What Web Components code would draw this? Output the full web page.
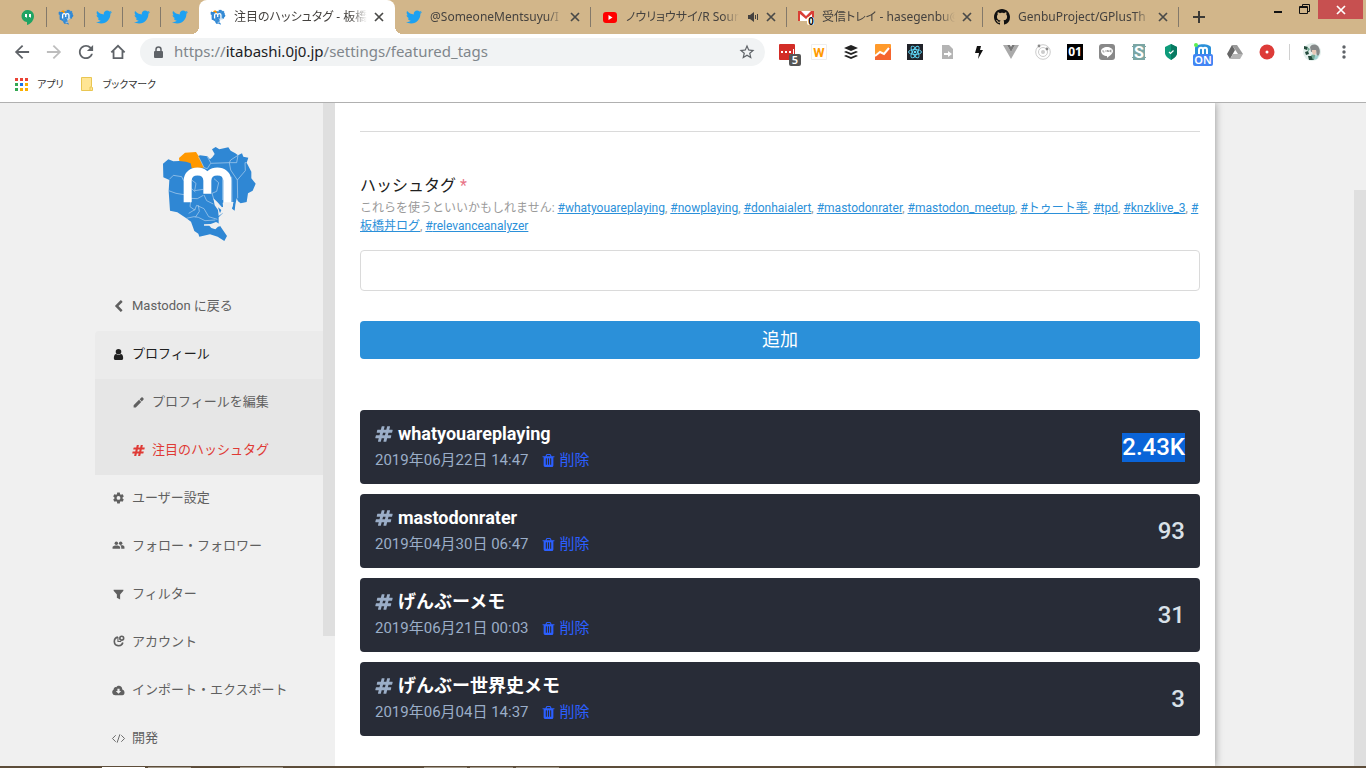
<!DOCTYPE html>
<html lang="ja">
<head>
<meta charset="utf-8">
<title>注目のハッシュタグ - 板橋丼</title>
<style>
    html, body { height: 100%; margin: 0; }

    body {
        display: flex;
        flex-direction: column;
        overflow: hidden;
        background: #f0f0f0;
        font-family: Roboto, 'Noto Sans CJK JP', sans-serif;
        color: #202020;
    }
</style>
</head>
<body>

<tab-strip>
    <pinned-tab icon="hangouts"></pinned-tab>
    <pinned-tab icon="map"></pinned-tab>
    <pinned-tab icon="twitter"></pinned-tab>
    <pinned-tab icon="twitter"></pinned-tab>
    <pinned-tab icon="twitter"></pinned-tab>
    <browser-tab icon="map" active>注目のハッシュタグ - 板橋丼</browser-tab>
    <browser-tab icon="twitter">@SomeoneMentsuyu/I</browser-tab>
    <browser-tab icon="youtube" audio>ノウリョウサイ/R Sound</browser-tab>
    <browser-tab icon="gmail">受信トレイ - hasegenbu@</browser-tab>
    <browser-tab icon="github">GenbuProject/GPlusTh</browser-tab>
</tab-strip>
<tool-bar></tool-bar>
<bookmark-bar></bookmark-bar>

<page-view>
    <side-nav slot="side">
        <nav-item icon="chevron">Mastodon に戻る</nav-item>
        <nav-item icon="user" selected>プロフィール</nav-item>
        <nav-item icon="pencil" sub>プロフィールを編集</nav-item>
        <nav-item icon="hashtag" sub current>注目のハッシュタグ</nav-item>
        <nav-item icon="cog">ユーザー設定</nav-item>
        <nav-item icon="users">フォロー・フォロワー</nav-item>
        <nav-item icon="filter">フィルター</nav-item>
        <nav-item icon="account">アカウント</nav-item>
        <nav-item icon="cloud">インポート・エクスポート</nav-item>
        <nav-item icon="code">開発</nav-item>
    </side-nav>
    <tag-form></tag-form>
    <tag-list>
        <tag-card date="2019年06月22日 14:47" count="2.43K" marked>whatyouareplaying</tag-card>
        <tag-card date="2019年04月30日 06:47" count="93">mastodonrater</tag-card>
        <tag-card date="2019年06月21日 00:03" count="31">げんぶーメモ</tag-card>
        <tag-card date="2019年06月04日 14:37" count="3">げんぶー世界史メモ</tag-card>
    </tag-list>
</page-view>
<task-edge></task-edge>

<script>
const HASH = '<path d="M991 1024l64-256h-254l-64 256h254zm768-504l-56 224q-7 24-31 24h-327l-64 256h311q15 0 25 12 10 14 6 28l-56 224q-5 24-31 24h-327l-81 328q-7 24-31 24h-224q-16 0-26-12-9-12-6-28l78-312h-254l-81 328q-7 24-31 24h-225q-15 0-25-12-9-12-6-28l78-312h-311q-15 0-25-12-9-12-6-28l56-224q7-24 31-24h327l64-256h-311q-15 0-25-12-10-14-6-28l56-224q5-24 31-24h327l81-328q7-24 32-24h224q15 0 25 12 9 12 6 28l-78 312h254l81-328q7-24 32-24h224q15 0 25 12 9 12 6 28l-78 312h311q15 0 25 12 9 12 6 28z"/>'

/* name: [viewBox, markup] */
const icons = {
    /* favicons */
    map: ['207 39 300 300', `
        <path fill="#2f87d4" d="M219 101L235 88L250 94L268 93L300 90L330 76L352 79L360 88L367 82L374 72L366 58L377 51L388 58L415 52L422 62L436 70L444 76L456 70L460 80L475 83L470 98L484 125L484 145L497 161L488 182L474 190L470 216L452 220L444 214L440 205L436 224L434 242L426 236L430 216L400 216L398 250L386 262L386 278L393 292L411 318L403 333L383 320L360 313L328 320L325 311L313 303L303 275L289 265L262 247L240 242L236 183L238 150L220 142Z"/>
        <path fill="#ff9800" d="M267 84L285 68L318 66L328 82L333 95L342 113L305 114L302 100L288 95L268 93Z"/>
        <g fill="none" stroke="#b5d3ee" stroke-width="2">
            <path d="M238 148L250 136L275 140L281 152M236 182L258 190L282 194M303 205L300 230L314 240L320 226L342 236L356 260L382 268M305 150L318 160L314 182L340 178M305 176L316 186M325 80L334 96L342 113L352 116L362 100L418 98L422 90L444 76M352 80L362 98M444 76L440 98L418 98L422 120L442 150L466 122L465 98L470 98M442 150L443 205M372 146L386 158L380 184L366 190M398 140L398 210M342 195L350 212L370 222M366 190L372 210M325 226L328 244L316 262M296 250L316 238M289 265L312 260L325 262L345 272L376 270M303 205L322 206L340 196M425 140L426 216"/>
        </g>
        <g fill="#f0f0f0"><path d="M370 205L382 216L396 232L404 228L399 248L386 258L384 240L374 226ZM342 283L362 282L378 276L390 282L393 288L384 290L376 298L364 294L358 287L342 287ZM398 218L430 216L428 230L414 226L400 240Z"/></g>
        <path fill="#2f87d4" d="M384 232L394 240L390 250Z"/>
        <path fill="none" stroke="#fff" stroke-width="24" d="M293 217V152C293 115 352 115 352 152V191M352 152C352 115 412 115 412 152V217"/>`],
    hangouts: ['0 0 16 16', '<path fill="#1fa463" d="M8 1a6 6 0 0 0-1 12v3c4-1 7-5 7-9a6 6 0 0 0-6-6z"/><path fill="#fff" d="M5 5h2v3l-1 1V8H5zM9 5h2v3l-1 1V8H9z"/>'],
    twitter: ['0 0 24 24', '<path fill="#1da1f2" d="M23.954 4.569c-.885.389-1.83.654-2.825.775 1.014-.611 1.794-1.574 2.163-2.723-.951.555-2.005.959-3.127 1.184-.896-.959-2.173-1.559-3.591-1.559-2.717 0-4.92 2.203-4.92 4.917 0 .39.045.765.127 1.124C7.691 8.094 4.066 6.13 1.64 3.161c-.427.722-.666 1.561-.666 2.475 0 1.71.87 3.213 2.188 4.096-.807-.026-1.566-.248-2.228-.616v.061c0 2.385 1.693 4.374 3.946 4.827-.413.111-.849.171-1.296.171-.314 0-.615-.03-.916-.086.631 1.953 2.445 3.377 4.604 3.417-1.68 1.319-3.809 2.105-6.102 2.105-.39 0-.779-.023-1.17-.067 2.189 1.394 4.768 2.209 7.557 2.209 9.054 0 13.999-7.496 13.999-13.986 0-.209 0-.42-.015-.63.961-.689 1.8-1.56 2.46-2.548l-.047-.02z"/>'],
    youtube: ['0 0 16 16', '<rect x="1" y="3" width="14" height="11" rx="3" fill="#f00"/><path fill="#fff" d="M6.500 6v5l4-2.500z"/>'],
    gmail: ['0 0 16 16', '<path fill="#fff" d="M1 2h14v10H1z"/><path fill="#d93f35" d="M0 2h3l5 5 5-5h3v10h-2V5L8 10 2 5v7H0z"/><rect x="9" y="8" width="7" height="8" rx="2" fill="#fff"/><text x="13" y="16" text-anchor="middle" font-family="Liberation Sans" font-weight="700" font-size="10" fill="#000">0</text>'],
    github: ['0 0 16 16', '<path fill="#111" d="M8 0C3.58 0 0 3.58 0 8c0 3.54 2.29 6.53 5.47 7.59.4.07.55-.17.55-.38 0-.19-.01-.82-.01-1.49-2.01.37-2.53-.49-2.69-.94-.09-.23-.48-.94-.82-1.13-.28-.15-.68-.52-.01-.53.63-.01 1.08.58 1.23.82.72 1.21 1.87.87 2.33.66.07-.52.28-.87.51-1.07-1.78-.2-3.64-.89-3.64-3.95 0-.87.31-1.59.82-2.15-.08-.2-.36-1.02.08-2.12 0 0 .67-.21 2.2.82.64-.18 1.32-.27 2-.27.68 0 1.36.09 2 .27 1.53-1.04 2.2-.82 2.2-.82.44 1.1.16 1.92.08 2.12.51.56.82 1.27.82 2.15 0 3.07-1.87 3.75-3.65 3.95.29.25.54.73.54 1.48 0 1.07-.01 1.93-.01 2.2 0 .21.15.46.55.38A8.013 8.013 0 0 0 16 8c0-4.42-3.58-8-8-8z"/>'],

    /* window and toolbar */
    close: ['0 0 8 8', '<path fill="none" stroke="currentColor" stroke-width="1.700" d="M0 0l8 8M8 0l-8 8"/>'],
    plus: ['0 0 12 12', '<path fill="none" stroke="currentColor" stroke-width="2" d="M6 0v12M0 6h12"/>'],
    minimize: ['0 0 12 12', '<path fill="#111" d="M1 7h8v2H1z"/>'],
    restore: ['0 0 12 12', '<path fill="none" stroke="#111" d="M3.500 2V.500h7v7H9M.500 2.500h8v7h-8zM0 3.500h8"/>'],
    audio: ['0 0 12 12', '<path fill="currentColor" d="M1 4h2l4-3v10L3 8H1z"/><path fill="none" stroke="currentColor" d="M8.500 4v4M10.500 3v6"/>'],
    back: ['3 3 18 18', '<path fill="currentColor" d="M20 11H7.830l5.590-5.590L12 4l-8 8 8 8 1.410-1.410L7.830 13H20v-2z"/>'],
    forward: ['3 3 18 18', '<path fill="currentColor" d="M12 4l-1.410 1.410L16.170 11H4v2h12.170l-5.580 5.590L12 20l8-8z"/>'],
    reload: ['3 3 18 18', '<path fill="currentColor" d="M17.650 6.350C16.200 4.900 14.210 4 12 4c-4.420 0-7.990 3.580-7.990 8s3.570 8 7.990 8c3.730 0 6.840-2.550 7.730-6h-2.080c-.82 2.330-3.040 4-5.650 4-3.310 0-6-2.690-6-6s2.690-6 6-6c1.660 0 3.140.69 4.220 1.780L13 11h7V4l-2.350 2.350z"/>'],
    home: ['0 0 18 18', '<path fill="none" stroke="currentColor" stroke-width="2" d="M1.500 9.500L9 2l7.500 7.500M4 8v8h10V8"/>'],
    lock: ['0 0 12 12', '<rect x="2" y="5" width="9" height="7" rx="1" fill="currentColor"/><path fill="none" stroke="currentColor" stroke-width="1.500" d="M4 5V3.500a2.500 2.500 0 0 1 5 0V5"/>'],
    star: ['0 0 24 24', '<path fill="currentColor" d="M22 9.240l-7.190-.62L12 2 9.190 8.630 2 9.240l5.460 4.730L5.820 21 12 17.270 18.180 21l-1.630-7.030L22 9.240zM12 15.400l-3.760 2.270 1-4.280-3.320-2.880 4.380-.38L12 6.100l1.710 4.040 4.380.38-3.320 2.880 1 4.280L12 15.400z"/>'],
    menu: ['0 0 16 16', '<g fill="currentColor"><circle cx="8" cy="3" r="1.700"/><circle cx="8" cy="8" r="1.700"/><circle cx="8" cy="13" r="1.700"/></g>'],
    avatar: ['0 0 18 18', '<circle cx="9" cy="9" r="9" fill="#e3efec"/><path fill="#244b3c" d="M1 3l4 1-1 3-3-1zM2 9l3-1 1 3-3 1zM5 13h6v4H6z"/><path fill="#74aa96" d="M4 4l3 2-2 3zM8 12l4-1 1 4-3 2z"/><path fill="#858989" d="M7 4c2-4 8-3 9 1 2 4 0 8-2 9l-1-6-5 1z"/><path fill="#e8c9b8" d="M9 7l4 0c1 3-1 5-2 5-2-1-2-3-2-5z"/><path fill="#9fd3d2" d="M12 13l4-1-2 4-3 1z"/>'],

    /* extensions */
    dots: ['0 0 16 16', '<rect width="16" height="16" rx="1" fill="#d32d27"/><path fill="#fff" d="M2 7h2v2H2zM6 7h2v2H6zM10 7h2v2h-2zM14 5h1v5h-1z"/><rect x="10" y="10" width="12" height="12" rx="2" fill="#555"/><text x="16" y="20" text-anchor="middle" font-family="Noto Sans" font-weight="600" font-size="11" fill="#fff">5</text>'],
    w: ['0 0 16 16', '<path fill="#fff" stroke="#eee" d="M.5.5h15v15H.5z"/><text x="8" y="13" text-anchor="middle" font-family="Roboto" font-weight="700" font-size="13" fill="#ff9a00">W</text>'],
    buffer: ['0 0 16 16', '<g fill="#222"><path d="M8 1l7 3-7 3-7-3zM3 7l5 2 5-2 2 1-7 3-7-3zM3 11l5 2 5-2 2 1-7 3-7-3z"/></g>'],
    chart: ['0 0 16 16', '<rect width="16" height="16" rx="1" fill="#ff9a2b"/><path fill="#f5642e" d="M0 12l5-4 3 2 6-7 2 2v11H0z"/><path fill="none" stroke="#fff" stroke-width="2" d="M0 12l5-4 4 2 5-6"/>'],
    react: ['0 0 16 16', '<rect width="16" height="16" fill="#20232a"/><g fill="none" stroke="#61dafb" stroke-width=".9"><ellipse cx="8" cy="8" rx="6.500" ry="2.500"/><ellipse cx="8" cy="8" rx="6.500" ry="2.500" transform="rotate(60 8 8)"/><ellipse cx="8" cy="8" rx="6.500" ry="2.500" transform="rotate(120 8 8)"/></g><circle cx="8" cy="8" r="1.300" fill="#61dafb"/>'],
    file: ['0 0 16 16', '<path fill="#b4b4b4" d="M3 1h7l4 4v10H3z"/><path fill="#fff" d="M5 9h4V7l4 3-4 3v-2H5z"/>'],
    bolt: ['0 0 16 16', '<path fill="#111" d="M6 2h4l-1 4h3L7 15l1-6H4z"/>'],
    vue: ['0 0 16 16', '<path fill="#aaa" d="M0 1h4l4 7 4-7h4L8 15z"/><path fill="#777" d="M4 1h3l1 2 1-2h3L8 8z"/>'],
    orbit: ['0 0 16 16', '<g fill="none" stroke="#ccc"><circle cx="8" cy="8" r="7.300"/><circle cx="8" cy="8" r="4.500"/></g><circle cx="8" cy="8" r="2" fill="#ccc"/><circle cx="4" cy="2" r="1.400" fill="#888"/><circle cx="12" cy="5" r="1.400" fill="#888"/>'],
    binary: ['0 0 16 16', '<rect width="16" height="16" fill="#000"/><text x="8" y="12" text-anchor="middle" font-family="Noto Sans" font-weight="700" font-size="12" fill="#fff">01</text>'],
    line: ['0 0 16 16', '<rect width="16" height="16" rx="3" fill="#888"/><path fill="#fff" d="M8 3c3 0 6 2 6 4 0 3-4 5-6 7v-2c-3 0-6-2-6-5 0-2 3-4 6-4z"/><path fill="none" stroke="#888" stroke-width=".7" d="M4 6v2h1.500M7 6v2M8.500 8V6l1.500 2V6M12.500 6h-1v2h1M11.500 7h1"/>'],
    s: ['0 0 16 16', '<rect x="2" width="12" height="16" fill="#7ba6a4"/><path fill="#7ba6a4" d="M1 2h14v1H1zM1 13h14v1H1z"/><text x="8" y="14" text-anchor="middle" font-family="Roboto" font-weight="700" font-size="16" fill="#fff">S</text>'],
    shield: ['0 0 16 16', '<path fill="#0e9b7a" d="M8 0l6 3v6c0 3-3 5-6 7-3-2-6-4-6-7V3z"/><path fill="#087a62" d="M8 0l6 3v6c0 3-3 5-6 7z"/><path fill="none" stroke="#fff" stroke-width="1.200" d="M6 8l1.500 1.500L10.500 6.500"/>'],
    masto: ['0 0 16 16', '<path fill="#2b90d9" d="M0 4c0-5 16-5 16 0v7H0z"/><path fill="none" stroke="#fff" stroke-width="2" d="M4 11V6c0-3 4-3 4 0v4M8 6c0-3 4-3 4 0v5"/><circle cx="1" cy="1" r="2" fill="#5bef4f"/><rect x="-2" y="10" width="20" height="12" rx="2" fill="#4285f4"/><text x="8" y="20" text-anchor="middle" font-family="Noto Sans" font-weight="600" font-size="11" fill="#fff">ON</text>'],
    drive: ['0 0 16 16', '<path fill="#999" d="M5 1h5l6 9h-5z"/><path fill="#666" d="M5 1l3 5-5 9-3-5z"/><path fill="#b5b5b5" d="M6 10h10l-3 5H3z"/>'],
    record: ['0 0 16 16', '<circle cx="8" cy="8" r="7.500" fill="#dd3b38"/><circle cx="8" cy="8" r="1.500" fill="#fff"/>'],

    /* bookmarks */
    apps: ['0 0 13 13', '<path fill="#ea4335" d="M0 0h3v3H0zM5 0h3v3H5zM10 0h3v3h-3z"/><path fill="#34a853" d="M0 5h3v3H0zM0 10h3v3H0z"/><path fill="#1a73e8" d="M5 5h3v3H5z"/><path fill="#fbaf00" d="M10 5h3v3h-3zM5 10h3v3H5zM10 10h3v3h-3z"/>'],
    folder: ['0 0 14 14', '<path fill="#ffe594" stroke="#e9c652" d="M1.500.5h10v9l1 1v3h-11zM10 13v-3h2"/>'],

    /* sidebar and cards */
    hashtag: ['0 0 1792 1792', HASH],
    chevron: ['0 0 1792 1792', '<path d="M1427 301l-531 531 531 531q19 19 19 45t-19 45l-166 166q-19 19-45 19t-45-19l-742-742q-19-19-19-45t19-45l742-742q19-19 45-19t45 19l166 166q19 19 19 45t-19 45z"/>'],
    user: ['0 0 1792 1792', '<path d="M1536 1399q0 109-62 187t-150 78h-854q-88 0-150-78t-62-187q0-85 8-160t31-152 58-131 94-89 134-34q131 128 313 128t313-128q76 0 134 34t94 89 58 131 31 152 8 160z"/><circle cx="896" cy="512" r="384"/>'],
    pencil: ['0 0 24 24', '<path d="M3 17v4h4L17 11l-4-4zM21 7c1-1 1-2 0-3l-1-1c-1-1-2-1-3 0l-3 3 4 4z"/>'],
    cog: ['0 1 24 24', '<path fill-rule="evenodd" d="M19.430 12.980c.04-.32.07-.64.07-.98s-.03-.66-.07-.98l2.110-1.650c.19-.15.24-.42.12-.64l-2-3.460c-.12-.22-.39-.3-.61-.22l-2.490 1c-.52-.4-1.080-.73-1.690-.98l-.38-2.650C14.460 2.180 14.250 2 14 2h-4c-.25 0-.46.18-.49.42l-.38 2.650c-.61.25-1.170.59-1.690.98l-2.490-1c-.23-.09-.49 0-.61.22l-2 3.460c-.13.22-.07.49.12.64l2.110 1.650c-.04.32-.07.65-.07.98s.03.66.07.98l-2.110 1.650c-.19.15-.24.42-.12.64l2 3.460c.12.22.39.3.61.22l2.490-1c.52.4 1.080.73 1.690.98l.38 2.650c.03.24.24.42.49.42h4c.25 0 .46-.18.49-.42l.38-2.650c.61-.25 1.170-.59 1.690-.98l2.490 1c.23.09.49 0 .61-.22l2-3.460c.12-.22.07-.49-.12-.64l-2.110-1.650zM12 15.500a3.500 3.500 0 1 1 0-7 3.500 3.500 0 0 1 0 7z"/>'],
    users: ['0 2 24 24', '<circle cx="8" cy="8" r="3.200"/><circle cx="16" cy="8" r="3.200"/><path d="M1 18v-3c0-4 14-4 14 0v3zM17 18v-3c0-1-1-2-2-3 4-1 8 0 8 3v3z"/>'],
    filter: ['0 0 24 24', '<path d="M3 3h18v2l-6 7v9l-6-3v-6L3 5z"/>'],
    account: ['0 2 24 24', '<g fill="none" stroke="currentColor" stroke-width="3"><path d="M11 4a8 8 0 1 0 9 10"/><circle cx="18" cy="6" r="3.500"/><path stroke-width="2" d="M11 4v8h6"/></g>'],
    cloud: ['0 0 24 20', '<path d="M6 19a6 6 0 0 1-3-11c0-3 3-5 5-4 3-5 11-3 11 4 5 1 6 10 0 11z"/><path fill="#f0f0f0" d="M10 7h4v4h3l-5 5-5-5h3z"/>'],
    code: ['0 0 28 24', '<path fill="none" stroke="currentColor" stroke-width="2" d="M8 5l-7 7 7 7M20 5l7 7-7 7M17 3l-6 18"/>'],
    trash: ['192 128 1408 1536', '<path d="M704 1376v-704q0-14-9-23t-23-9h-64q-14 0-23 9t-9 23v704q0 14 9 23t23 9h64q14 0 23-9t9-23zm256 0v-704q0-14-9-23t-23-9h-64q-14 0-23 9t-9 23v704q0 14 9 23t23 9h64q14 0 23-9t9-23zm256 0v-704q0-14-9-23t-23-9h-64q-14 0-23 9t-9 23v704q0 14 9 23t23 9h64q14 0 23-9t9-23zm-544-992h448l-48-117q-7-9-17-11h-317q-10 2-17 11zm928 32v64q0 14-9 23t-23 9h-96v948q0 83-47 143t-113 60h-832q-66 0-113-58t-47-141v-952h-96q-14 0-23-9t-9-23v-64q0-14 9-23t23-9h309l70-167q15-37 54-63t79-26h320q40 0 79 26t54 63l70 167h309q14 0 23 9t9 23z"/>']
}

/* every element fills its shadow root from render() */
class BaseElement extends HTMLElement {
    constructor() {
        super()
        this.attachShadow({ mode: 'open' })
    }

    connectedCallback() {
        const template = document.createElement('template')
        template.innerHTML = this.render()
        this.shadowRoot.replaceChildren(template.content.cloneNode(true))
    }
}

class UiIcon extends BaseElement {
    render() {
        const [box, body] = icons[this.getAttribute('name')]
        const size = this.getAttribute('size') || 16
        return `
            <style>
                :host { display: block; flex: none; width: ${size}px; height: ${size}px; }
                svg { display: block; width: 100%; height: 100%; overflow: visible; }
            </style>
            <svg viewBox="${box}" fill="currentColor" aria-hidden="true">${body}</svg>
        `
    }
}

class PinnedTab extends BaseElement {
    render() {
        return `
            <style>
                :host { display: flex; flex: none; width: 38px; align-items: center; }
                button { flex: 1; display: flex; justify-content: center; padding: 0; border: 0; background: none; }
                i { width: 1px; height: 20px; background: #83796a; }
                :host(:nth-of-type(5)) i { visibility: hidden; }
            </style>
            <button aria-label="${this.getAttribute('icon')}"><ui-icon name="${this.getAttribute('icon')}"></ui-icon></button>
            <i></i>
        `
    }
}

class BrowserTab extends BaseElement {
    render() {
        return `
            <style>
                :host {
                    position: relative;
                    display: flex;
                    flex: 0 1 196px;
                    min-width: 0;
                    box-sizing: border-box;
                    align-items: center;
                    gap: 8px;
                    padding-left: 11px;
                    color: #45423f;
                }
                :host([active]) { background: #fff; border-radius: 8px 8px 0 0; }
                :host([active])::before, :host([active])::after {
                    content: '';
                    position: absolute;
                    bottom: 0;
                    width: 8px;
                    height: 8px;
                }
                :host([active])::before { right: 100%; background: radial-gradient(circle at 0 0, transparent 8px, #fff 8px); }
                :host([active])::after { left: 100%; background: radial-gradient(circle at 100% 0, transparent 8px, #fff 8px); }
                .title {
                    flex: 1;
                    min-width: 0;
                    overflow: hidden;
                    white-space: nowrap;
                    font-size: 12px;
                    line-height: 20px;
                    mask-image: linear-gradient(to left, transparent, #000 16px);
                }
                button { display: flex; padding: 0; border: 0; background: none; color: #4a4a48; }
                i { width: 1px; height: 20px; margin-left: 3px; background: #83796a; }
                :host([active]) i { visibility: hidden; }
            </style>
            <ui-icon name="${this.getAttribute('icon')}"></ui-icon>
            <span class="title"><slot></slot></span>
            ${this.hasAttribute('audio') ? '<ui-icon name="audio" size="12"></ui-icon>' : ''}
            <button aria-label="閉じる"><ui-icon name="close" size="8"></ui-icon></button>
            <i></i>
        `
    }
}

class TabStrip extends BaseElement {
    render() {
        return `
            <style>
                :host {
                    display: flex;
                    flex: none;
                    height: 34px;
                    padding-left: 9px;
                    background: #d2b68a;
                    font-family: 'Noto Sans', 'Noto Sans CJK JP', sans-serif;
                    font-feature-settings: 'palt';
                }
                button { display: flex; align-items: center; justify-content: center; padding: 0; border: 0; background: none; color: #3c3a36; }
                .new { width: 40px; }
                .window { display: flex; align-items: flex-start; margin-left: auto; padding-right: 3px; }
                .window button { width: 26px; height: 19px; }
                .window .close { width: 45px; background: #c75050; color: #fff; }
            </style>
            <slot></slot>
            <button class="new" aria-label="新しいタブ"><ui-icon name="plus" size="12"></ui-icon></button>
            <div class="window">
                <button aria-label="最小化"><ui-icon name="minimize" size="12"></ui-icon></button>
                <button aria-label="元に戻す"><ui-icon name="restore" size="12"></ui-icon></button>
                <button class="close" aria-label="閉じる"><ui-icon name="close" size="8"></ui-icon></button>
            </div>
        `
    }
}

class ToolBar extends BaseElement {
    render() {
        const extensions = ['dots', 'w', 'buffer', 'chart', 'react', 'file', 'bolt', 'vue', 'orbit', 'binary', 'line', 's', 'shield', 'masto', 'drive', 'record']
        return `
            <style>
                :host { display: flex; flex: none; align-items: center; height: 36px; padding: 0 6px; background: #fff; color: #5f6368; }
                button { display: flex; flex: none; width: 32px; height: 32px; align-items: center; justify-content: center; padding: 0; border: 0; background: none; color: inherit; }
                button[disabled] { color: #bdbdbd; }
                .address {
                    display: flex;
                    flex: 1;
                    min-width: 0;
                    align-items: center;
                    gap: 10px;
                    height: 28px;
                    margin: 0 6px;
                    padding-left: 12px;
                    border-radius: 14px;
                    background: #f1f3f4;
                }
                .url {
                    flex: 1;
                    overflow: hidden;
                    white-space: nowrap;
                    padding-bottom: 2px;
                    font: 15px/20px 'Noto Sans', sans-serif;
                    color: #80868b;
                }
                .url span { color: #202124; }
                .address button { margin-right: 2px; }
                hr { width: 1px; height: 16px; margin: 0 6px; border: 0; background: #d0d0d0; }
            </style>
            <button aria-label="戻る"><ui-icon name="back"></ui-icon></button>
            <button aria-label="進む" disabled><ui-icon name="forward"></ui-icon></button>
            <button aria-label="再読み込み"><ui-icon name="reload"></ui-icon></button>
            <button aria-label="ホーム"><ui-icon name="home"></ui-icon></button>
            <div class="address">
                <ui-icon name="lock" size="12"></ui-icon>
                <div class="url">https://<span>itabashi.0j0.jp</span>/settings/featured_tags</div>
                <button aria-label="ブックマークに追加"><ui-icon name="star" size="18"></ui-icon></button>
            </div>
            ${extensions.map((e) => `<button aria-label="${e}"><ui-icon name="${e}"></ui-icon></button>`).join('')}
            <hr>
            <button aria-label="プロフィール"><ui-icon name="avatar" size="18"></ui-icon></button>
            <button aria-label="メニュー"><ui-icon name="menu"></ui-icon></button>
        `
    }
}

class BookmarkBar extends BaseElement {
    render() {
        return `
            <style>
                :host {
                    display: flex;
                    flex: none;
                    align-items: center;
                    gap: 16px;
                    height: 33px;
                    box-sizing: border-box;
                    padding: 0 15px 4px;
                    border-bottom: 1px solid #b0b0b0;
                    background: #fff;
                    font: 10px/16px 'Noto Sans', 'Noto Sans CJK JP', sans-serif;
                    font-feature-settings: 'palt';
                }
                button { display: flex; align-items: center; gap: 9px; padding: 0; border: 0; background: none; font: inherit; font-feature-settings: inherit; color: #333; }
            </style>
            <button><ui-icon name="apps" size="13"></ui-icon>アプリ</button>
            <button><ui-icon name="folder" size="14"></ui-icon>ブックマーク</button>
        `
    }
}

/* overlay scrollbar, start and size in thousandths of the track */
class ScrollTrack extends BaseElement {
    render() {
        const start = Number(this.getAttribute('start'))
        const size = Number(this.getAttribute('size'))
        return `
            <style>
                :host { display: grid; flex: none; width: 12px; grid-template-rows: ${start}fr ${size}fr ${1000 - start - size}fr; }
                i { grid-row: 2; background: #dfdfdf; }
            </style>
            <i></i>
        `
    }
}

class PageView extends BaseElement {
    render() {
        return `
            <style>
                :host { display: flex; flex: 1; min-height: 0; overflow: hidden; }
                .side { position: relative; z-index: 1; display: flex; flex: none; width: 335px; background: #f0f0f0; }
                main {
                    flex: 1 1 0;
                    min-width: 0;
                    max-width: 880px;
                    box-sizing: border-box;
                    padding: 28px 15px 0 25px;
                    background: #fff;
                    box-shadow: 0 0 8px rgba(0, 0, 0, .4);
                }
                .page-scroll { margin-left: auto; }
            </style>
            <div class="side">
                <slot name="side"></slot>
                <scroll-track start="0" size="804"></scroll-track>
            </div>
            <main><slot></slot></main>
            <scroll-track class="page-scroll" start="131" size="869"></scroll-track>
        `
    }
}

class SideNav extends BaseElement {
    render() {
        return `
            <style>
                :host { display: flex; flex: 1; flex-direction: column; padding-left: 95px; overflow: hidden; }
                .logo { display: flex; justify-content: center; padding: 40px 0; }
                nav { display: flex; flex-direction: column; }
            </style>
            <a class="logo" href="#" aria-label="Mastodon"><ui-icon name="map" size="100"></ui-icon></a>
            <nav><slot></slot></nav>
        `
    }
}

class NavItem extends BaseElement {
    render() {
        return `
            <style>
                :host { display: block; color: #606060; }
                :host([selected]) { background: #ebebeb; border-radius: 4px 0 0 0; color: #202020; }
                :host([sub]) { background: #e6e6e6; }
                :host([current]) { color: #df3a35; }
                a { display: flex; align-items: center; height: 46px; padding: 0 0 2px 15px; color: inherit; font-size: 13px; line-height: 20px; text-decoration: none; }
                :host([sub]) a { padding-left: 35px; }
                .icon { display: flex; width: 17px; justify-content: center; margin-right: 5px; }
            </style>
            <a href="#"><span class="icon"><ui-icon name="${this.getAttribute('icon')}" size="13"></ui-icon></span><slot></slot></a>
        `
    }
}

class TagForm extends BaseElement {
    render() {
        const tags = ['whatyouareplaying', 'nowplaying', 'donhaialert', 'mastodonrater', 'mastodon_meetup', 'トゥート率', 'tpd', 'knzklive_3', '板橋丼ログ', 'relevanceanalyzer']
        return `
            <style>
                :host { display: block; }
                hr { height: 1px; margin: 0 0 42px; border: 0; background: #dadada; }
                label { display: block; font-size: 16px; line-height: 24px; }
                abbr { color: #e87487; text-decoration: none; }
                p { margin: 1px 0 15px; font-size: 12px; line-height: 18px; color: #9a9a9a; }
                p a { color: #2b90d9; }
                input { display: block; width: 100%; height: 41px; box-sizing: border-box; padding: 10px; border: 1px solid #dadada; border-radius: 4px; font: inherit; outline: 0; }
                button { display: block; width: 100%; height: 38px; margin: 30px 0 51px; padding: 0; border: 0; border-radius: 4px; background: #2b90d9; color: #fff; font: 18px/36px Roboto, 'Noto Sans CJK JP', sans-serif; }
            </style>
            <form>
                <hr>
                <label for="name">ハッシュタグ <abbr>*</abbr></label>
                <p id="hint">これらを使うといいかもしれません: ${tags.map((t) => `<a href="#"><span>#</span>${t}</a>`).join(', ')}</p>
                <input id="name" type="text" aria-describedby="hint">
                <button type="button">追加</button>
            </form>
        `
    }
}

class TagList extends BaseElement {
    render() {
        return `
            <style>:host { display: flex; flex-direction: column; gap: 10px; }</style>
            <slot></slot>
        `
    }
}

class TagCard extends BaseElement {
    render() {
        return `
            <style>
                :host { display: flex; align-items: center; justify-content: space-between; padding: 15px; border-radius: 4px; background: #282c37; }
                h4 { display: flex; align-items: center; gap: 5px; margin: 0 0 8px; font-size: 18px; line-height: 18px; font-weight: 700; color: #fff; }
                h4 ui-icon { color: #9baec8; }
                .info { display: flex; align-items: center; font-size: 15px; line-height: 18px; color: #9baec8; }
                a { display: flex; align-items: center; gap: 5px; margin-left: 13px; color: #2b5fff; text-decoration: none; }
                .count { font-size: 24px; line-height: 29px; font-weight: 500; color: #d9e1e8; }
                :host([marked]) .count { background: #0a64d8; color: #fff; }
            </style>
            <div>
                <h4><ui-icon name="hashtag" size="18"></ui-icon><slot></slot></h4>
                <div class="info">
                    <time>${this.getAttribute('date')}</time>
                    <a href="#"><ui-icon name="trash" size="13"></ui-icon>削除</a>
                </div>
            </div>
            <span class="count">${this.getAttribute('count')}</span>
        `
    }
}

/* top edge of the desktop taskbar, 1 = open window, 2 = focused */
class TaskEdge extends BaseElement {
    render() {
        const slots = [2, 1, 0, 1, 0, 0, 0, 1, 1, 1]
        const colors = ['transparent', '#a39a8c', '#fff']
        return `
            <style>
                :host { display: flex; flex: none; gap: 3px; height: 1px; padding: 1px 0 0 102px; background: #5d4d3a; }
                i { width: 43px; }
            </style>
            ${slots.map((s) => `<i style="background: ${colors[s]}"></i>`).join('')}
        `
    }
}

customElements.define('ui-icon', UiIcon)
customElements.define('pinned-tab', PinnedTab)
customElements.define('browser-tab', BrowserTab)
customElements.define('tab-strip', TabStrip)
customElements.define('tool-bar', ToolBar)
customElements.define('bookmark-bar', BookmarkBar)
customElements.define('scroll-track', ScrollTrack)
customElements.define('page-view', PageView)
customElements.define('side-nav', SideNav)
customElements.define('nav-item', NavItem)
customElements.define('tag-form', TagForm)
customElements.define('tag-list', TagList)
customElements.define('tag-card', TagCard)
customElements.define('task-edge', TaskEdge)
</script>
</body>
</html>
